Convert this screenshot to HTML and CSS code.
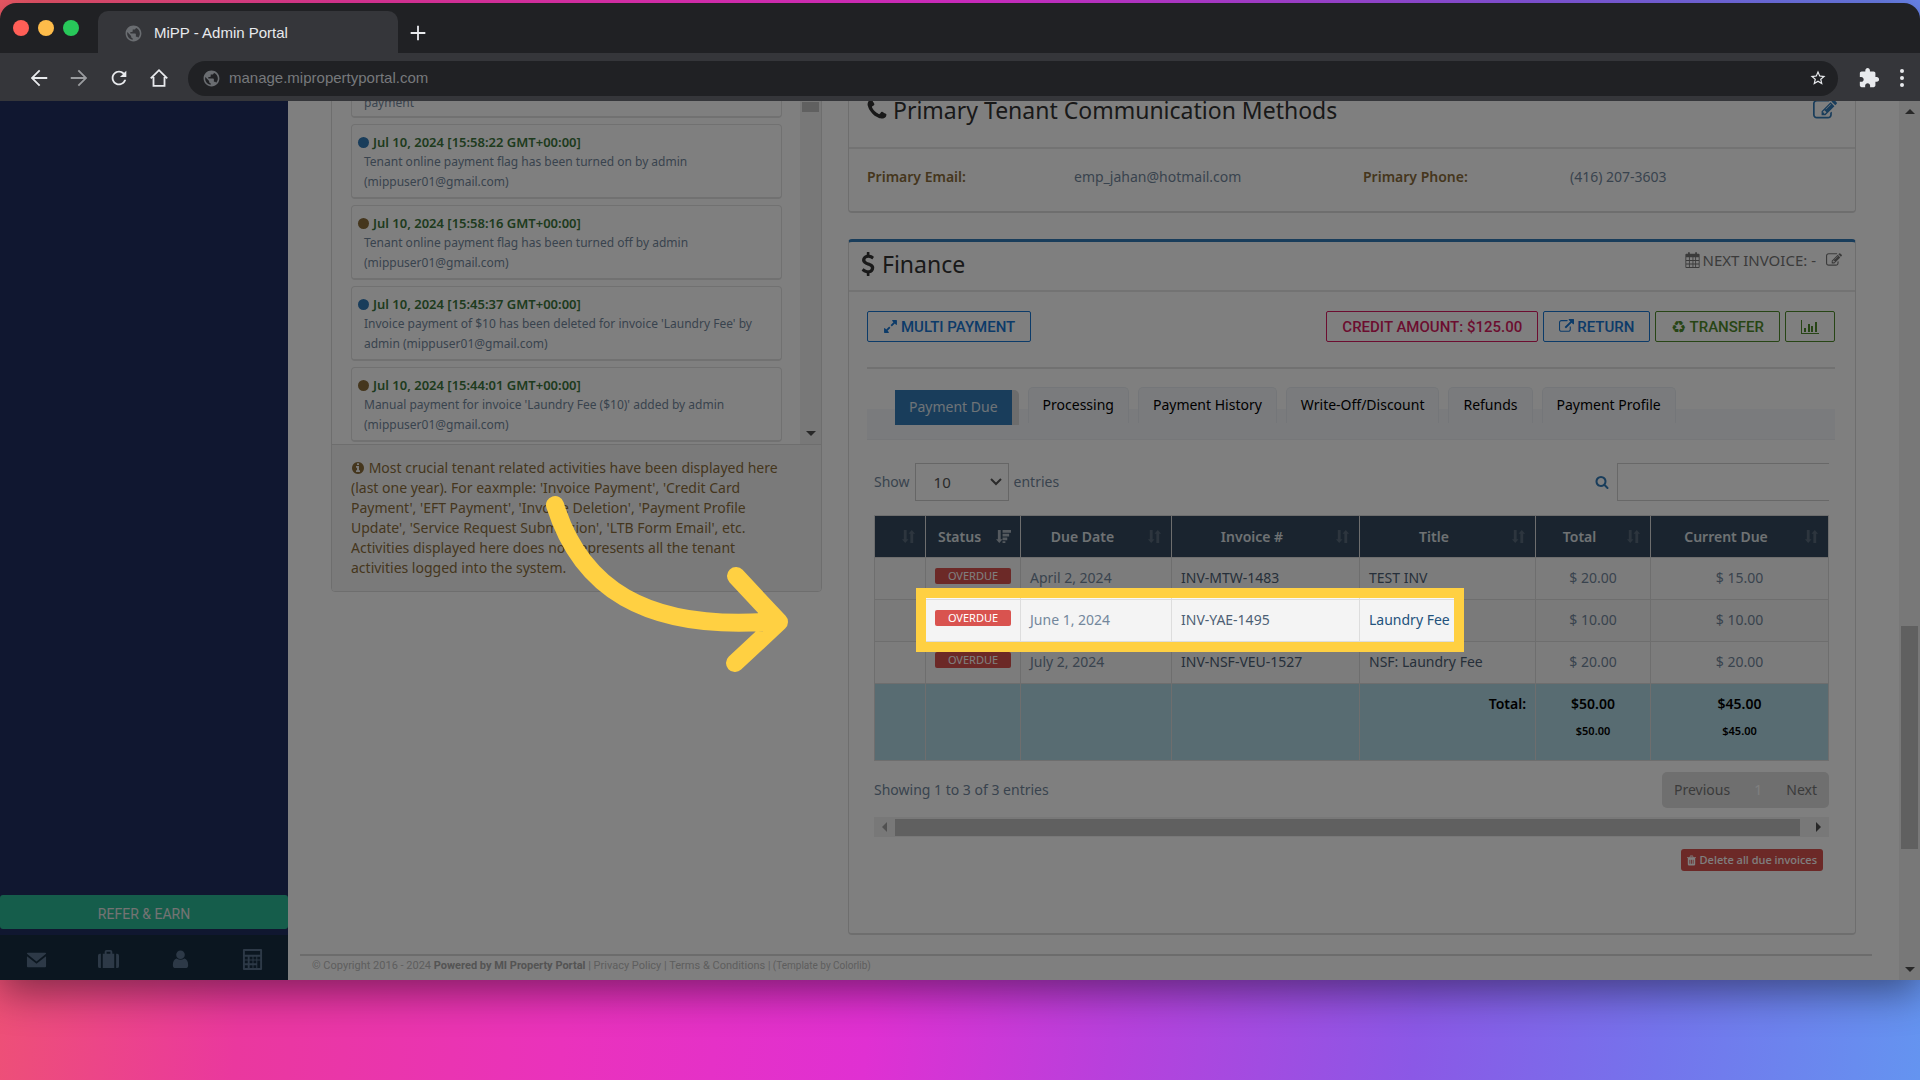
FILE: index.html
```html
<!DOCTYPE html>
<html lang="en">
<head>
<meta charset="utf-8">
<title>MiPP - Admin Portal</title>
<link rel="stylesheet" href="styles.css">
</head>
<body>
<svg class="defs" aria-hidden="true">
  <symbol id="i-globe" viewBox="0 0 24 24"><path d="M12 2C6.480 2 2 6.480 2 12s4.480 10 10 10 10-4.480 10-10S17.520 2 12 2zm-1 17.930c-3.950-.490-7-3.850-7-7.930 0-.620.080-1.210.210-1.790L9 15v1c0 1.100.900 2 2 2v1.930zm6.900-2.540c-.260-.810-1-1.390-1.900-1.390h-1v-3c0-.550-.450-1-1-1H8v-2h2c.550 0 1-.450 1-1V7h2c1.100 0 2-.900 2-2v-.410c2.930 1.190 5 4.060 5 7.410 0 2.080-.800 3.970-2.100 5.390z"/></symbol>
  <symbol id="i-edit" viewBox="0 0 1792 1792"><path d="M888 1184l116-116-152-152-116 116v56h96v96h56zm440-720q-16-16-33 1l-350 350q-17 17-1 33t33-1l350-350q17-17 1-33zm80 594v190q0 119-84.500 203.500t-203.500 84.500h-832q-119 0-203.500-84.500t-84.500-203.500v-832q0-119 84.500-203.500t203.500-84.500h832q63 0 117 25 15 7 18 23 3 17-9 29l-49 49q-14 14-32 8-23-6-45-6h-832q-66 0-113 47t-47 113v832q0 66 47 113t113 47h832q66 0 113-47t47-113v-126q0-13 9-22l64-64q15-15 35-7t20 29zm-96-738l288 288-672 672h-288v-288zm444 132l-92 92-288-288 92-92q28-28 68-28t68 28l152 152q28 28 28 68t-28 68z"/></symbol>
  <symbol id="i-sort" viewBox="0 0 16 16"><path d="M3 1h3v10h2l-3.500 4L1 11h2zM10 15h3V5h2l-3.500-4L8 5h2z"/></symbol>
  <symbol id="i-sorted" viewBox="0 0 16 16"><path d="M2 1h3v10h2l-3.500 4L0 11h2zM7 1h9v3H7zM7 5h7v3H7zM7 9h5v3H7zM7 13h3v2H7z"/></symbol>
</svg>

<div class="browser">
  <header class="tabbar">
    <div class="lights"><span class="light red"></span><span class="light amber"></span><span class="light green"></span></div>
    <div class="tab"><svg class="globe"><use href="#i-globe"/></svg><span>MiPP - Admin Portal</span></div>
    <button class="chrome-btn new-tab" aria-label="New tab"><svg viewBox="0 0 24 24"><path d="M11 4h2v7h7v2h-7v7h-2v-7H4v-2h7z"/></svg></button>
  </header>
  <div class="toolbar">
    <button class="chrome-btn" aria-label="Back"><svg viewBox="0 0 24 24"><path d="M21 11H6.830l6.590-6.590L12 3l-9 9 9 9 1.410-1.410L6.830 13H21z"/></svg></button>
    <button class="chrome-btn faded" aria-label="Forward"><svg viewBox="0 0 24 24"><path d="M12 3l-1.410 1.410L17.170 11H3v2h14.170l-6.580 6.590L12 21l9-9z"/></svg></button>
    <button class="chrome-btn" aria-label="Reload"><svg viewBox="0 0 24 24"><path d="M17.650 6.350C16.200 4.900 14.210 4 12 4c-4.420 0-7.990 3.580-7.990 8s3.570 8 7.990 8c3.730 0 6.840-2.550 7.730-6h-2.080c-.820 2.330-3.040 4-5.650 4-3.310 0-6-2.690-6-6s2.690-6 6-6c1.660 0 3.140.690 4.220 1.780L13 11h7V4l-2.350 2.350z"/></svg></button>
    <button class="chrome-btn" aria-label="Home"><svg viewBox="0 0 24 24"><path d="M3 12.500L12 3.500l9 9M6 11v9.500h12V11" fill="none" stroke="currentColor" stroke-width="2"/></svg></button>
    <div class="address">
      <svg class="globe"><use href="#i-globe"/></svg>
      <input class="url" type="text" aria-label="Address" value="manage.mipropertyportal.com">
      <button class="chrome-btn star" aria-label="Bookmark"><svg viewBox="0 0 24 24"><path d="M22 9.240l-7.190-.620L12 2 9.190 8.630 2 9.240l5.460 4.730L5.820 21 12 17.270 18.180 21l-1.630-7.030L22 9.240zM12 15.400l-3.760 2.270 1-4.280-3.320-2.880 4.380-.380L12 6.100l1.710 4.040 4.380.380-3.320 2.880 1 4.280L12 15.400z"/></svg></button>
    </div>
    <button class="chrome-btn puzzle" aria-label="Extensions"><svg viewBox="0 0 24 24"><path d="M20.500 11H19V7c0-1.100-.900-2-2-2h-4V3.500C13 2.120 11.880 1 10.500 1S8 2.120 8 3.500V5H4c-1.100 0-1.990.900-1.990 2v3.800H3.500c1.490 0 2.700 1.210 2.700 2.700s-1.210 2.700-2.700 2.700H2V20c0 1.100.900 2 2 2h3.800v-1.500c0-1.490 1.210-2.700 2.700-2.700 1.490 0 2.700 1.210 2.700 2.700V22H17c1.100 0 2-.900 2-2v-4h1.500c1.380 0 2.500-1.120 2.500-2.500S21.880 11 20.500 11z"/></svg></button>
    <button class="chrome-btn more" aria-label="Menu"><svg viewBox="0 0 8 20"><circle cx="4" cy="3" r="2"/><circle cx="4" cy="10" r="2"/><circle cx="4" cy="17" r="2"/></svg></button>
  </div>

  <div class="viewport">
    <aside class="sidebar">
      <button class="refer">REFER &amp; EARN</button>
      <nav class="side-icons">
        <a href="#mail" aria-label="Mail"><svg viewBox="0 0 22 22"><path d="M1 5q0-1 1-1h18q1 0 1 1L11 13zM1 7.500l10 8 10-8V18q0 1-1 1H2q-1 0-1-1z"/></svg></a>
        <a href="#files" aria-label="Portfolio"><svg viewBox="0 0 22 22"><path d="M3 5v15H2q-2 0-2-2V7q0-2 2-2zM19 5h1q2 0 2 2v11q0 2-2 2h-1zM5 20V5h2V3q0-2 2-2h4q2 0 2 2v2h2v15zM9 5h4V3H9z" fill-rule="evenodd"/></svg></a>
        <a href="#user" aria-label="Account"><svg viewBox="0 0 22 22"><circle cx="11" cy="6" r="4.500"/><path d="M7 10q4 2.500 8 0 4 1 4 7 0 3-3 3H6q-3 0-3-3 0-6 4-7z"/></svg></a>
        <a href="#calc" aria-label="Calculator"><svg viewBox="0 0 22 22"><path fill-rule="evenodd" d="M1 1q0-1 1-1h18q1 0 1 1v20q0 1-1 1H2q-1 0-1-1zM3 2v4h16V2zM3 8v3h3V8zM8 8v3h3V8zM12 8v3h3V8zM16 8v3h3V8zM3 12v3h3v-3zM8 12v3h3v-3zM12 12v3h3v-3zM16 12v8h3v-8zM3 17v3h3v-3zM8 17v3h3v-3zM12 17v3h3v-3z"/></svg></a>
      </nav>
    </aside>

    <div class="content">
      <main class="columns">
        <section class="activity">
          <div class="activity-scroll">
            <div class="activity-list">
              <article class="entry"><p>payment</p></article>
              <article class="entry"><h4><i class="dot blue"></i>Jul 10, 2024 [15:58:22 GMT+00:00]</h4><p>Tenant online payment flag has been turned on by admin (mippuser01@gmail.com)</p></article>
              <article class="entry"><h4><i class="dot brown"></i>Jul 10, 2024 [15:58:16 GMT+00:00]</h4><p>Tenant online payment flag has been turned off by admin (mippuser01@gmail.com)</p></article>
              <article class="entry"><h4><i class="dot blue"></i>Jul 10, 2024 [15:45:37 GMT+00:00]</h4><p>Invoice payment of $10 has been deleted for invoice 'Laundry Fee' by admin (mippuser01@gmail.com)</p></article>
              <article class="entry"><h4><i class="dot brown"></i>Jul 10, 2024 [15:44:01 GMT+00:00]</h4><p>Manual payment for invoice 'Laundry Fee ($10)' added by admin (mippuser01@gmail.com)</p></article>
            </div>
            <div class="list-bar"><span class="list-thumb"></span><i class="arrow down"></i></div>
          </div>
          <p class="note"><svg viewBox="0 0 1792 1792"><path d="M1152 1376v-160q0-14-9-23t-23-9h-96v-512q0-14-9-23t-23-9h-320q-14 0-23 9t-9 23v160q0 14 9 23t23 9h96v320h-96q-14 0-23 9t-9 23v160q0 14 9 23t23 9h448q14 0 23-9t9-23zm-128-896v-160q0-14-9-23t-23-9h-192q-14 0-23 9t-9 23v160q0 14 9 23t23 9h192q14 0 23-9t9-23zm640 416q0 209-103 385.500t-279.500 279.500-385.500 103-385.500-103-279.500-279.500-103-385.500 103-385.500 279.500-279.500 385.500-103 385.500 103 279.500 279.500 103 385.500z"/></svg> Most crucial tenant related activities have been displayed here<br>(last one year). For eaxmple: 'Invoice Payment', 'Credit Card<br>Payment', 'EFT Payment', 'Invoice Deletion', 'Payment Profile<br>Update', 'Service Request Submission', 'LTB Form Email', etc.<br>Activities displayed here does not represents all the tenant<br>activities logged into the system.</p>
        </section>

        <div class="right">
          <section class="panel contact">
            <header class="panel-head">
              <h2><svg class="i-phone" viewBox="0 0 1792 1792"><path d="M1600 1240q0 27-10 70.500t-21 68.500q-21 50-122 106-94 51-186 51-27 0-52.500-3.500t-57.500-12.500-47.500-14.500-55.500-20.500-49-18q-98-35-175-83-128-79-264.500-215.500t-215.500-264.500q-48-77-83-175-3-9-18-49t-20.500-55.500-14.500-47.500-12.500-57.500-3.500-52.500q0-92 51-186 56-101 106-122 25-11 68.500-21t70.500-10q14 0 21 3 18 6 53 76 11 19 30 54t35 63.500 31 53.500q3 4 17.500 25t21.500 35.500 7 28.500q0 20-28.500 50t-62 55-62 53-28.500 46q0 9 5 22.500t8.500 20.500 14 24 11.500 19q76 137 174 235t235 174q2 1 19 11.500t24 14 20.500 8.500 22.500 5q18 0 46-28.500t53-62 55-62 50-28.500q14 0 28.500 7t35.500 21.500 25 17.500q25 15 53.500 31t63.500 35 54 30q70 35 76 53 3 7 3 21z"/></svg>Primary Tenant Communication Methods</h2>
              <button class="icon-btn edit-lg" aria-label="Edit contact"><svg><use href="#i-edit"/></svg></button>
            </header>
            <dl class="contact-body">
              <dt>Primary Email:</dt><dd>emp_jahan@hotmail.com</dd>
              <dt>Primary Phone:</dt><dd>(416) 207-3603</dd>
            </dl>
          </section>

          <section class="panel finance">
            <header class="panel-head">
              <h2><svg class="i-usd" viewBox="384 0 1024 1792"><path d="M1362 1185q0 153-99.500 263.500t-258.500 136.500v175q0 14-9 23t-23 9h-135q-13 0-22.500-9.500t-9.500-22.500v-175q-66-9-127.500-31t-101.500-44.500-74-48-46.500-37.500-17.500-18q-17-21-2-41l103-135q7-10 23-12 15-2 24 9l2 2q113 99 243 125 37 8 74 8 81 0 142.500-43t61.500-122q0-28-15-53t-33.500-42-58.500-37.500-66-32-80-32.500q-39-16-61.500-25t-61.500-26.500-62.500-31-56.500-35.500-53.500-42.500-43.500-49-35.500-58-21-66.500-8.500-78q0-138 98-242t255-134v-180q0-13 9.500-22.500t22.500-9.500h135q14 0 23 9t9 23v176q57 6 110.500 23t87 33.500 63.500 37.500 39 29 15 14q17 18 5 38l-81 146q-8 15-23 16-14 3-27-7-3-3-14.500-12t-39-26.500-58.500-32-74.500-26-85.500-11.500q-95 0-155 43t-60 111q0 26 8.500 48t29.500 41.500 39.500 33 56 31 60.500 27 70 27.500q53 20 81 31.500t76 35 75.500 42.500 62 50 53 63.500 31.500 76.500 13 94z"/></svg>Finance</h2>
              <div class="next-invoice">
                <svg viewBox="0 0 16 18"><path fill-rule="evenodd" d="M3 2V1q0-1 1-1t1 1v1h6V1q0-1 1-1t1 1v1h2q1 0 1 1v14q0 1-1 1H1q-1 0-1-1V3q0-1 1-1zM1 6v3h3V6zM5 6v3h3V6zM9 6v3h2V6zM12 6v3h3V6zM1 10v3h3v-3zM5 10v3h3v-3zM9 10v3h2v-3zM12 10v3h3v-3zM1 14v3h3v-3zM5 14v3h3v-3zM9 14v3h2v-3zM12 14v3h3v-3z"/></svg>
                <span>NEXT INVOICE: -</span>
                <button class="icon-btn" aria-label="Edit next invoice"><svg><use href="#i-edit"/></svg></button>
              </div>
            </header>
            <div class="finance-body">
              <div class="actions">
                <button class="btn btn-blue push"><svg viewBox="0 0 1792 1792"><path d="M883 1056q0 13-10 23l-332 332 144 144q19 19 19 45t-19 45-45 19h-448q-26 0-45-19t-19-45v-448q0-26 19-45t45-19 45 19l144 144 332-332q10-10 23-10t23 10l114 114q10 10 10 23zm781-864v448q0 26-19 45t-45 19-45-19l-144-144-332 332q-10 10-23 10t-23-10l-114-114q-10-10-10-23t10-23l332-332-144-144q-19-19-19-45t19-45 45-19h448q26 0 45 19t19 45z"/></svg>MULTI PAYMENT</button>
                <button class="btn btn-pink">CREDIT AMOUNT: $125.00</button>
                <button class="btn btn-blue"><svg viewBox="0 0 1792 1792"><path d="M1408 928v320q0 119-84.500 203.500t-203.500 84.500h-832q-119 0-203.500-84.500t-84.500-203.500v-832q0-119 84.500-203.500t203.500-84.500h704q14 0 23 9t9 23v64q0 14-9 23t-23 9h-704q-66 0-113 47t-47 113v832q0 66 47 113t113 47h832q66 0 113-47t47-113v-320q0-14 9-23t23-9h64q14 0 23 9t9 23zm384-864v512q0 26-19 45t-45 19-45-19l-176-176-652 652q-10 10-23 10t-23-10l-114-114q-10-10-10-23t10-23l652-652-176-176q-19-19-19-45t19-45 45-19h512q26 0 45 19t19 45z"/></svg>RETURN</button>
                <button class="btn btn-green"><span class="recycle">♻</span>TRANSFER</button>
                <button class="btn btn-green" aria-label="Chart"><svg class="i-chart" viewBox="0 0 18 14"><path d="M0 0h1v13h17v1H0zM3 8h2v4H3zM7 4h2v8H7zM10 6h2v6h-2zM14 2h2v10h-2z"/></svg></button>
              </div>
              <nav class="tabs">
                <a class="tab-link active" href="#due"><span>Payment Due</span></a>
                <a class="tab-link" href="#processing">Processing</a>
                <a class="tab-link" href="#history">Payment History</a>
                <a class="tab-link" href="#writeoff">Write-Off/Discount</a>
                <a class="tab-link" href="#refunds">Refunds</a>
                <a class="tab-link" href="#profile">Payment Profile</a>
              </nav>
              <div class="table-area">
                <div class="filters">
                  <label class="length" for="len">Show</label>
                  <span class="select-wrap"><select id="len"><option>10</option></select><svg viewBox="0 0 12 8"><path d="M1 1l5 5 5-5" fill="none" stroke="currentColor" stroke-width="2"/></svg></span>
                  <span class="push">entries</span>
                  <label class="search-label" for="q" aria-label="Search"><svg viewBox="0 0 1792 1792"><path d="M1216 832q0-185-131.500-316.500t-316.500-131.500-316.500 131.500-131.500 316.500 131.500 316.500 316.500 131.500 316.500-131.500 131.500-316.500zm512 832q0 52-38 90t-90 38q-54 0-90-38l-343-342q-179 124-399 124-143 0-273.500-55.500t-225-150-150-225-55.500-273.500 55.500-273.500 150-225 225-150 273.500-55.500 273.500 55.500 225 150 150 225 55.500 273.500q0 220-124 399l343 343q37 37 37 90z"/></svg></label>
                  <input id="q" class="search" type="text">
                </div>
                <table class="invoices">
                  <colgroup><col class="c-pick"><col class="c-status"><col class="c-date"><col class="c-inv"><col class="c-title"><col class="c-total"><col class="c-due"></colgroup>
                  <thead>
                    <tr>
                      <th><div><span></span><svg><use href="#i-sort"/></svg></div></th>
                      <th><div><span>Status</span><svg class="on"><use href="#i-sorted"/></svg></div></th>
                      <th><div><span>Due Date</span><svg><use href="#i-sort"/></svg></div></th>
                      <th><div><span>Invoice #</span><svg><use href="#i-sort"/></svg></div></th>
                      <th><div><span>Title</span><svg><use href="#i-sort"/></svg></div></th>
                      <th><div><span>Total</span><svg><use href="#i-sort"/></svg></div></th>
                      <th><div><span>Current Due</span><svg><use href="#i-sort"/></svg></div></th>
                    </tr>
                  </thead>
                  <tbody>
                    <tr><td></td><td><span class="badge">OVERDUE</span></td><td>April 2, 2024</td><td class="dark">INV-MTW-1483</td><td class="dark">TEST INV</td><td class="num">$ 20.00</td><td class="num">$ 15.00</td></tr>
                    <tr><td></td><td class="anchor"><span class="badge">OVERDUE</span><div class="spotlight"></div></td><td>June 1, 2024</td><td class="dark">INV-YAE-1495</td><td><a href="#inv-1495">Laundry Fee</a></td><td class="num">$ 10.00</td><td class="num">$ 10.00</td></tr>
                    <tr><td></td><td><span class="badge">OVERDUE</span></td><td>July 2, 2024</td><td class="dark">INV-NSF-VEU-1527</td><td class="dark">NSF: Laundry Fee</td><td class="num">$ 20.00</td><td class="num">$ 20.00</td></tr>
                  </tbody>
                  <tfoot>
                    <tr><td></td><td></td><td></td><td></td><td class="sum">Total:</td><td class="num">$50.00<small>$50.00</small></td><td class="num">$45.00<small>$45.00</small></td></tr>
                  </tfoot>
                </table>
                <div class="table-foot">
                  <span>Showing 1 to 3 of 3 entries</span>
                  <nav class="pager"><a href="#prev">Previous</a><a class="current" href="#1">1</a><a href="#next">Next</a></nav>
                </div>
                <div class="hbar"><i class="arrow left"></i><span class="hthumb"></span><i class="arrow right-end"></i></div>
                <div class="delete-row"><button class="delete"><svg viewBox="0 0 11 12"><path fill-rule="evenodd" d="M3 2l1-2h3l1 2h3v1h-1v8q0 1-1 1H2q-1 0-1-1V3H0V2zM4 2h3V1H4zM3 5v5h1V5zM5 5v5h1V5zM7 5v5h1V5z"/></svg>Delete all due invoices</button></div>
              </div>
            </div>
          </section>
        </div>
      </main>
      <footer class="page-foot">© Copyright 2016 - 2024 <b>Powered by MI Property Portal</b> | <a href="#privacy">Privacy Policy</a> | <a href="#terms">Terms &amp; Conditions</a> <small>| (Template by Colorlib)</small></footer>
    </div>

    <div class="page-bar"><i class="arrow up"></i><span class="page-thumb"></span><i class="arrow down"></i></div>

    <svg class="pointer" viewBox="0 0 250 180"><path d="M15 13C40 93 102 141 238 129M196 84L239 130L195 171" fill="none" stroke="#ffd042" stroke-width="18" stroke-linecap="round" stroke-linejoin="round"/></svg>
  </div>
</div>
</body>
</html>
```
FILE: styles.css
```css
* { box-sizing: border-box; }
body {
  margin: 0;
  min-height: 100vh;
  padding: 3px 0 100px;
  display: flex;
  flex-direction: column;
  overflow: hidden;
  background: linear-gradient(96deg, #ef5a66 0%, #ea389e 17%, #ea32bc 33%, #e030d2 48%, #b840dc 60%, #8b58e6 75%, #7474ec 87%, #6494f0 100%);
  color: #73879c;
  font: 14px/20px "Noto Sans", sans-serif;
}
button, input, select { font: inherit; color: inherit; margin: 0; }
button { background: none; border: 0; padding: 0; }
svg { fill: currentColor; }
a { color: inherit; text-decoration: none; }
h2, h4, p, dl, dd { margin: 0; }
.defs { position: absolute; width: 0; height: 0; }
.push { margin-right: auto; }

/* Browser frame */
.browser {
  flex: 1;
  display: flex;
  flex-direction: column;
  border-radius: 16px 16px 0 0;
  overflow: hidden;
  box-shadow: 0 12px 40px rgba(0, 0, 0, .45);
  height: calc(100vh - 103px);
}
.tabbar {
  flex: none;
  height: 50px;
  display: flex;
  align-items: flex-end;
  background: #202124;
  color: #e8eaed;
  font-family: "Liberation Sans", sans-serif;
}
.lights { width: 98px; display: flex; gap: 9px; padding: 0 0 17px 13px; }
.light { width: 16px; height: 16px; border-radius: 50%; }
.red { background: #ff5f57; }
.amber { background: #febc4a; }
.green { background: #28c85a; }
.tab {
  width: 300px;
  height: 42px;
  padding: 2px 0 0 26px;
  display: flex;
  align-items: center;
  gap: 11px;
  border-radius: 10px 10px 0 0;
  background: #35363a;
  font-size: 15px;
}
.globe { width: 19px; height: 19px; color: #6a6d71; flex: none; }
.chrome-btn { display: flex; color: #e8eaed; }
.chrome-btn svg { width: 22px; height: 22px; }
.new-tab { padding: 0 0 9px 9px; }
.toolbar {
  flex: none;
  height: 48px;
  padding: 2px 14px 0 28px;
  display: flex;
  align-items: center;
  gap: 18px;
  background: #35363a;
}
.faded { color: #9a9c9f; }
.address {
  flex: 1;
  height: 35px;
  padding: 0 11px 0 14px;
  margin-right: 2px;
  display: flex;
  align-items: center;
  gap: 8px;
  border-radius: 18px;
  background: #202124;
}
.url {
  flex: 1;
  border: 0;
  padding: 0;
  background: none;
  color: #77797c;
  font: 15px/20px "Liberation Sans", sans-serif;
}
.star svg { width: 18px; height: 18px; }
.puzzle svg { width: 22px; height: 22px; }
.more svg { width: 8px; height: 20px; }

/* Page */
.viewport {
  flex: 1;
  min-height: 0;
  position: relative;
  display: flex;
  overflow: hidden;
  background: #fff;
}
.sidebar {
  width: 288px;
  flex: none;
  display: flex;
  flex-direction: column;
  justify-content: flex-end;
  gap: 6px;
  background: #202e60;
}
.refer {
  height: 34px;
  padding-top: 3px;
  border-radius: 3px;
  background: #2aba96;
  color: #e6e6e6;
  font: 14px/20px Roboto, sans-serif;
}
.side-icons {
  height: 45px;
  padding-top: 4px;
  display: flex;
  align-items: center;
  background: #172d40;
  color: #5a738e;
}
.side-icons a { flex: 1; display: flex; justify-content: center; }
.side-icons svg { width: 21px; height: 21px; }
.content { flex: 1; min-width: 0; }
.columns {
  display: grid;
  grid-template-columns: 491fr 1008fr;
  align-items: start;
  gap: 26px;
  margin-top: -24px;
  padding: 0 43px;
}

/* Activity log */
.activity {
  border: 1px solid #ddd;
  border-radius: 4px;
  overflow: hidden;
}
.activity-scroll { height: 366px; display: flex; justify-content: space-between; overflow: hidden; }
.activity-list {
  width: 431px;
  margin-left: 19px;
  display: flex;
  flex-direction: column;
  gap: 6px;
}
.entry {
  flex: none;
  height: 75px;
  padding: 7px 8px 7px 12px;
  border: 1px solid #e2e2e2;
  border-width: 1px 1px 2px;
  border-radius: 4px;
  font-size: 12px;
}
.entry:first-child { height: 40px; padding-top: 14px; }
.entry h4 { margin-left: -6px; display: flex; align-items: center; gap: 4px; color: #3c763d; font-size: 13px; font-weight: 600; line-height: 20px; }
.dot { width: 11px; height: 11px; border-radius: 50%; }
.blue { background: #337ab7; }
.brown { background: #8a6d3b; }
.list-bar {
  width: 21px;
  padding: 24px 2px 8px;
  display: flex;
  flex-direction: column;
  align-items: center;
  justify-content: space-between;
  background: #f1f1f1;
}
.list-thumb { width: 17px; height: 10px; background: #c1c1c1; }
.arrow { width: 0; height: 0; border: 5px solid transparent; }
.down { border-top-color: #505050; border-bottom: 0; }
.up { border-bottom-color: #505050; border-top: 0; }
.left { border-right-color: #a3a3a3; border-left: 0; }
.right-end { border-left-color: #505050; border-right: 0; }
.note {
  padding: 13px 16px 13px 19px;
  border-top: 1px solid #ddd;
  background: #f5f5f5;
  color: #8a6d3b;
  font-size: 14px;
  white-space: nowrap;
}
.note svg { width: 14px; height: 14px; vertical-align: -2px; }

/* Panels */
.right { display: flex; flex-direction: column; gap: 26px; min-width: 0; }
.panel { border: 1px solid #ddd; border-bottom-width: 2px; border-radius: 4px; }
.panel-head {
  display: flex;
  justify-content: space-between;
  align-items: flex-start;
  border-bottom: 2px solid #e6e6e6;
}
.panel h2 {
  display: flex;
  align-items: center;
  color: #333;
  font-size: 23px;
  font-weight: 400;
  line-height: 32px;
}
.contact .panel-head { height: 71px; padding: 16px 18px 0 16px; }
.i-phone { width: 24px; height: 24px; margin-right: 4px; }
.icon-btn { display: flex; align-self: center; }
.icon-btn svg { width: 16px; height: 16px; }
.edit-lg { align-self: flex-start; padding-top: 4px; color: #337ab7; }
.edit-lg svg { width: 24px; height: 24px; }
.contact-body {
  height: 62px;
  padding: 18px 18px 17px;
  display: grid;
  grid-template-columns: 207fr 289fr 207fr 267fr;
  font-size: 14px;
}
.contact-body dt { color: #8a6d3b; font-weight: 600; }
.finance { border-top: 3px solid #337ab7; }
.finance .panel-head { height: 50px; padding: 6px 13px 0 12px; }
.i-usd { width: 14px; height: 24px; margin-right: 7px; }
.next-invoice { height: 24px; display: flex; align-items: center; gap: 3px; color: #777; font-size: 15px; }
.next-invoice > svg { width: 15px; height: 16px; }
.next-invoice .icon-btn { margin-left: 7px; }
.finance-body { padding: 19px 20px 62px 18px; }
.actions {
  display: flex;
  gap: 5px;
  padding-bottom: 25px;
  border-bottom: 2px solid #e2e2e2;
}
.btn {
  height: 31px;
  padding: 0 15px;
  display: flex;
  align-items: center;
  gap: 3px;
  border: 1px solid currentColor;
  border-radius: 2px;
  font: 500 15px/20px Roboto, sans-serif;
}
.btn svg { width: 15px; height: 15px; }
.btn .i-chart { width: 18px; height: 14px; }
.btn-blue { color: #1976d2; }
.btn-pink { color: #d81b60; }
.btn-green { color: #4f8a2b; }
.recycle { font: 17px/20px "DejaVu Sans", sans-serif; }

.tabs {
  margin-top: 18px;
  height: 53px;
  padding-left: 28px;
  display: flex;
  align-items: flex-start;
  gap: 9px;
  border-bottom: 1px solid #eceff3;
  background: linear-gradient(transparent 22px, #f5f7fa 22px);
}
.tab-link {
  padding: 7px 14px 8px;
  border: 1px solid #e9edf2;
  border-bottom: 0;
  border-radius: 5px 5px 0 0;
  background: #f5f7fa;
  color: #000;
  font-size: 14px;
}
.tab-link.active {
  margin-top: 3px;
  padding: 0 7px 0 0;
  border: 0;
  background: #dadada;
  color: #dde6ee;
}
.active span { display: block; padding: 7px 14px 8px; background: #337ab7; }

.table-area { padding: 23px 6px 0 7px; }
.filters { display: flex; align-items: center; gap: 5px; height: 38px; font-size: 14px; }
.select-wrap { display: flex; align-items: center; width: 94px; height: 38px; border: 1px solid #ccc; color: #555; }
.select-wrap select { appearance: none; flex: 1; height: 100%; padding: 0 18px; border: 0; background: none; font-size: 15px; }
.select-wrap svg { width: 12px; height: 8px; margin-right: 6px; }
.search-label { display: flex; margin-right: 3px; color: #337ab7; }
.search-label svg { width: 14px; height: 14px; }
.search { width: 212px; height: 38px; border: 1px solid #d0d0d0; border-right: 0; padding: 0 10px; background: none; }

.invoices {
  width: 100%;
  margin-top: 14px;
  table-layout: fixed;
  border-collapse: collapse;
  font-size: 14px;
}
.c-pick { width: 51px; }
.c-status { width: 95px; }
.c-date { width: 151px; }
.c-inv { width: 188px; }
.c-title { width: 176px; }
.c-total { width: 115px; }
.c-due { width: 178px; }
.invoices th, .invoices td { border: 1px solid #ddd; }
.invoices th { height: 42px; padding: 0 9px; background: #34495e; color: #dfe3e7; font-weight: 600; }
.invoices th div { display: flex; align-items: center; }
.invoices th span { flex: 1; padding-right: 12px; }
.invoices th svg { width: 15px; height: 15px; flex: none; color: #5a6b7c; }
.invoices th .on { color: #aab4be; }
.invoices td { height: 42px; padding: 0 9px 2px; background: #f9f9f9; white-space: nowrap; }
.invoices tbody tr:nth-child(2) td { background: #f4f4f4; }
.invoices .dark { color: #4d5f74; }
.invoices td a { color: #23527c; }
.invoices .num { text-align: center; }
.badge {
  display: block;
  height: 16px;
  margin-top: -3px;
  border-radius: 2px;
  background: #d9534f;
  color: #fff;
  font: 11px/16px "Noto Sans", sans-serif;
  text-align: center;
}
.invoices tfoot td { height: 77px; padding-top: 10px; vertical-align: top; background: #b0d8e4; color: #000; font-weight: 600; }
.invoices .sum { text-align: right; }
.invoices small { display: block; margin-top: 7px; font-size: 11px; }

/* Walkthrough highlight: lights one row and dims everything around it */
.anchor { position: relative; }
.spotlight {
  position: absolute;
  z-index: 5;
  top: -2px;
  left: 0;
  width: 528px;
  height: 44px;
  box-shadow: 0 0 0 10px #ffd042, 0 0 0 3000px rgba(0, 0, 0, .5);
  pointer-events: none;
}
.pointer {
  position: absolute;
  z-index: 6;
  left: 540px;
  top: 391px;
  width: 250px;
  height: 180px;
}

.table-foot { margin-top: 11px; display: flex; justify-content: space-between; align-items: center; }
.pager { width: 167px; height: 36px; padding: 0 12px; display: flex; align-items: center; justify-content: space-between; border-radius: 5px; background: #dedede; color: #777; }
.pager .current { color: #fff; }
.hbar { margin-top: 9px; height: 20px; padding: 0 8px; display: flex; align-items: center; gap: 8px; background: #f1f1f1; }
.hthumb { flex: 1; height: 17px; margin-right: 8px; background: #c1c1c1; }
.delete-row { display: flex; justify-content: flex-end; padding: 12px 6px 0 0; }
.delete { height: 22px; padding: 0 6px; display: flex; align-items: center; gap: 4px; border-radius: 3px; background: #d9534f; color: #fff; font-size: 11px; font-weight: 500; }
.delete svg { width: 9px; height: 11px; }

.page-foot {
  margin: 19px 27px 0 12px;
  padding: 0 12px;
  border-top: 2px solid #d9d9d9;
  color: #bcbcbc;
  font: 11px/20px Roboto, sans-serif;
}
.page-foot b { color: #a8a8a8; }
.page-foot small { font-size: 10px; }
.page-bar { width: 21px; flex: none; display: flex; flex-direction: column; align-items: center; padding: 8px 0; background: #f1f1f1; }
.page-thumb { width: 17px; height: 223px; margin: 512px 0 auto; background: #c1c1c1; }
```
